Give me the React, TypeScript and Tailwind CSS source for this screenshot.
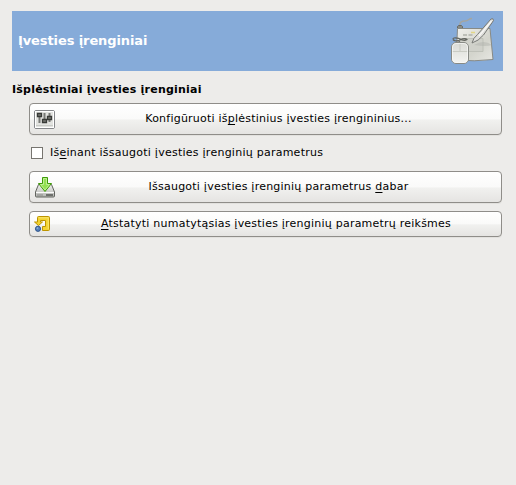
import type { ReactNode } from "react";

function TabletIcon() {
  return (
    <svg width="48" height="48" viewBox="0 0 48 48" className="shrink-0">
      <defs>
        <linearGradient id="tablet" x1="0" y1="0" x2="1" y2="1">
          <stop offset="0" stopColor="#f1f1ed" />
          <stop offset="0.6" stopColor="#d3d4cc" />
          <stop offset="1" stopColor="#e7e7e2" />
        </linearGradient>
        <linearGradient id="mouse" x1="0" y1="0" x2="0" y2="1">
          <stop offset="0" stopColor="#d9dad5" />
          <stop offset="1" stopColor="#f4f4f1" />
        </linearGradient>
      </defs>
      <path d="M10 9.500C9 5 12 4 15 4C19 4 18 1.500 22 1.500" fill="none" stroke="#a3a5a1" strokeWidth="1.5" />
      <path d="M7.500 11V9.500L8.500 8.500h3l1 1V11" fill="#888a85" stroke="#666864" />
      <path d="M7.500 11.500H40L43 42.500Q24 44.800 6 43Z" fill="url(#tablet)" stroke="#888a85" strokeLinejoin="round" />
      <path d="M10 21.500h23v13h-24z" fill="#d0d1ca" stroke="#babcb4" strokeWidth="0.8" />
      <path d="M13 18h4M18.500 18h4M28 18h4" stroke="#b0b2ab" strokeWidth="1.6" />
      <path d="M21 15.500h4" stroke="#e2d686" strokeWidth="1.5" />
      <path d="M24 28Q34 22 42 28Q36 30 24 28" fill="#b2b4ad" opacity="0.5" />
      <path d="M41 2Q43.500 .8 43.500 3.500L33.500 18Q28.500 24 22 26Q23 21 27.500 17.500Z" fill="#dededb" stroke="#777975" strokeWidth="1" />
      <path d="M41.500 4L29 19" stroke="#f8f8f6" strokeWidth="1.300" />
      <path d="M10 26Q10 23.500 5 23.500Q1.500 22 4 21Q8 20.500 12 23Q15 24 17 22.500Q15 20.500 10 23Q6 25 3 23" fill="none" stroke="#62645f" strokeWidth="1.1" />
      <rect x="1.500" y="25.500" width="17" height="21" rx="4.500" fill="url(#mouse)" stroke="#888a85" />
      <path d="M10 26v8M2 34.500h16" stroke="#c6c8c1" strokeWidth="0.9" />
      <rect x="2.500" y="26.500" width="15" height="19" rx="3.500" fill="none" stroke="#fafaf8" opacity="0.7" />
    </svg>
  );
}

function SlidersIcon() {
  return (
    <svg width="22" height="22" viewBox="0 0 22 22">
      <rect x="0.500" y="2.500" width="20" height="18" rx="1.500" fill="#e2e3e0" stroke="#85878a" />
      <rect x="1.500" y="3.500" width="18" height="16" fill="none" stroke="#fff" />
      <path d="M2 17.500h17" stroke="#c9cbc7" />
      <path d="M5.500 6v9M10.500 5v9M15.500 5v9" stroke="#777975" strokeWidth="2" />
      <path d="M3.500 5.500h4v3h-4zM8.500 11.500h4v3h-4zM13.500 8.500h4v3h-4z" fill="#777975" stroke="#383a37" strokeWidth="1.300" />
    </svg>
  );
}

function SaveIcon() {
  return (
    <svg width="22" height="22" viewBox="0 0 22 22">
      <defs>
        <linearGradient id="drive" x1="0" y1="0" x2="0" y2="1">
          <stop offset="0" stopColor="#f0f0ee" />
          <stop offset="1" stopColor="#b3b5b1" />
        </linearGradient>
      </defs>
      <path d="M4.500 8.500h13l3 7.500v4q0 1-1 1h-17q-1 0-1-1v-4z" fill="url(#drive)" stroke="#62645f" strokeLinejoin="round" />
      <path d="M2 16.500h18" stroke="#fafafa" />
      <path d="M3.500 19h5" stroke="#777975" strokeWidth="1.500" strokeDasharray="1 1" />
      <path d="M12 19h7" stroke="#555753" strokeWidth="1.500" />
      <path d="M8.500 1.500h5v6H17.500L11 15.500L4.500 7.500h4z" fill="#93e052" stroke="#3f9a08" />
      <path d="M9.500 2.500h3v6h3l-4.500 5.500L6.500 8.500h3z" fill="none" stroke="#c8f5a4" strokeWidth="0.8" />
    </svg>
  );
}

function ResetIcon() {
  return (
    <svg width="17" height="16" viewBox="0 0 17 16">
      <path d="M3.500 1.500q0-1 1-1h10q1 0 1 1v12q0 1-1 1H8.500v-4h3v-6H6.500v1.500H8.500L4.500 9.500L.5 6h3z" fill="#f3d331" stroke="#bd9400" strokeLinejoin="round" />
      <path d="M4.700 1.800h9.600v11.400" fill="none" stroke="#fbec83" strokeWidth="0.800" />
      <circle cx="4" cy="12.800" r="2.600" fill="#5580bb" stroke="#264c83" strokeWidth="0.900" />
      <circle cx="3.500" cy="12.100" r="0.900" fill="#8eafd9" />
    </svg>
  );
}

function Mnemonic({ children }: { children: string }) {
  return <span className="underline decoration-1 underline-offset-2 [text-decoration-skip-ink:none]">{children}</span>;
}

function ActionButton({ icon, children, compact = false }: { icon: ReactNode; children: ReactNode; compact?: boolean }) {
  return (
    <button
      className={`flex w-[473px] items-center rounded-[4px] border border-[#8f8d89] bg-[linear-gradient(#ffffff,#fafaf9_50%,#f1f1ef_53%,#e5e4e2)] pl-1 shadow-[0_1px_0_#e2e1de] ${compact ? "h-[26px]" : "h-8"}`}
    >
      <span className="flex shrink-0">{icon}</span>
      <span className="flex-1 whitespace-pre pb-px text-center tracking-[0.228px]">{children}</span>
    </button>
  );
}

export default function App() {
  return (
    <main className="h-[485px] w-[516px] bg-[#edecea] pl-3 pr-[13px] pt-[11px] font-['DejaVu_Sans',sans-serif] text-[11px] leading-[14px] text-black">
      <header className="flex h-[60px] items-center justify-between bg-[#86abd9] pl-1.5 pr-[5px] text-white">
        <h1 className="whitespace-nowrap text-[13px] font-bold tracking-[-0.1px]">Įvesties įrenginiai</h1>
        <TabletIcon />
      </header>
      <h2 className="mt-3 whitespace-nowrap text-[11px] font-bold tracking-[0.22px]">Išplėstiniai įvesties įrenginiai</h2>
      <section className="ml-[17px] mt-1.5 flex flex-col">
        <ActionButton icon={<SlidersIcon />}>
          Konfigūruoti iš<Mnemonic>p</Mnemonic>lėstinius įvesties įrengininius...
        </ActionButton>
        <label className="ml-0.5 mt-[11px] flex h-[14px] items-center gap-[7px]">
          <input type="checkbox" className="size-3 appearance-none border border-[#777570] bg-white" />
          <span className="whitespace-nowrap pb-px tracking-[0.25px]">
            Iš<Mnemonic>e</Mnemonic>inant išsaugoti įvesties įrenginių parametrus
          </span>
        </label>
        <div className="mt-[11px] flex flex-col gap-2">
          <ActionButton icon={<SaveIcon />}>
            Išsaugoti įvesties įrenginių parametrus <Mnemonic>d</Mnemonic>abar
          </ActionButton>
          <ActionButton compact icon={<ResetIcon />}>
            <Mnemonic>A</Mnemonic>tstatyti numatytąsias įvesties įrenginių parametrų reikšmes
          </ActionButton>
        </div>
      </section>
    </main>
  );
}
